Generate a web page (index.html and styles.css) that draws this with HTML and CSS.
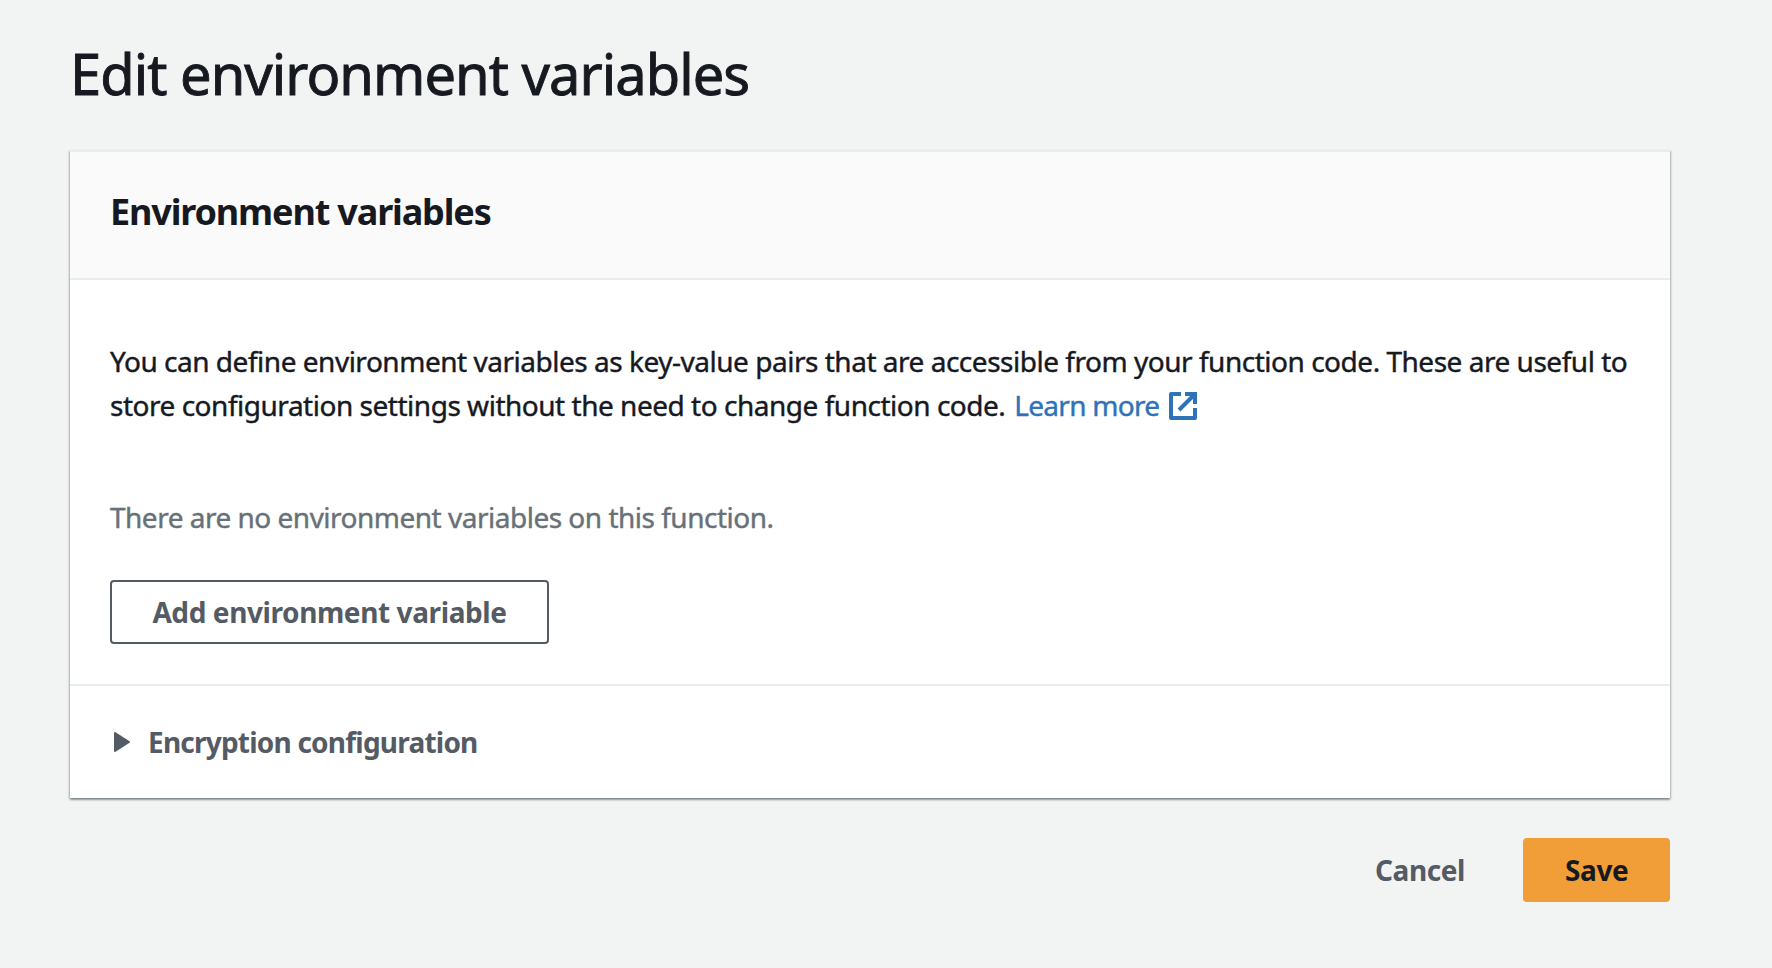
FILE: index.html
```html
<!DOCTYPE html>
<html lang="en">
<head>
<meta charset="utf-8">
<title>Edit environment variables</title>
<link rel="stylesheet" href="styles.css">
</head>
<body>
<main class="page">
  <h1 class="page-title">Edit environment variables</h1>
  <section class="card">
    <header class="card-header"><h2 class="card-title">Environment variables</h2></header>
    <div class="card-body">
      <p class="description">You can define environment variables as key-value pairs that are accessible from your function code. These are useful to<br>store configuration settings without the need to change function code. <a class="link" href="#">Learn more<svg class="external" viewBox="0 0 28 28" aria-hidden="true"><path d="M12 2H2V26H26V16" fill="none" stroke="currentColor" stroke-width="4" stroke-linejoin="round"/><path d="M16 2H26V12M25 3L10 18" fill="none" stroke="currentColor" stroke-width="4"/></svg></a></p>
      <p class="empty">There are no environment variables on this function.</p>
      <button class="button" type="button">Add environment variable</button>
    </div>
    <div class="expander"><svg class="caret" viewBox="0 0 16 20" aria-hidden="true"><path d="M1 1L15 10L1 19Z" fill="currentColor" stroke="currentColor" stroke-width="2" stroke-linejoin="round"/></svg>Encryption configuration</div>
  </section>
  <footer class="actions">
    <button class="button button-link" type="button">Cancel</button>
    <button class="button button-primary" type="button">Save</button>
  </footer>
</main>
</body>
</html>
```

FILE: styles.css
```css
* { box-sizing: border-box; }

body {
  margin: 0;
  background: #f2f3f3;
  color: #16191f;
  font: 28px/44px "Noto Sans", "Open Sans", sans-serif;
}

.page { padding: 38px 102px 0 70px; }

.page-title {
  margin: 0 0 42px;
  font-size: 56px;
  font-weight: 400;
  line-height: 70px;
  letter-spacing: -0.95px;
  -webkit-text-stroke: 0.9px currentColor;
}

.card {
  height: 648px;
  display: flex;
  flex-direction: column;
  background: #fff;
  border-top: 2px solid #eaeded;
  box-shadow: 0 2px 2px rgba(0, 28, 36, 0.3), 1px 1px 2px rgba(0, 28, 36, 0.2), -1px 1px 2px rgba(0, 28, 36, 0.2);
}

.card-header {
  height: 128px;
  padding: 38px 40px 0;
  background: #fafafa;
  border-bottom: 2px solid #eaeded;
}

.card-title {
  margin: 0;
  font-size: 36px;
  font-weight: 700;
  line-height: 44px;
  letter-spacing: -1.15px;
}

.card-body {
  height: 406px;
  padding: 59px 40px 0;
  border-bottom: 2px solid #eaeded;
}

.description {
  margin: 0 0 68px;
  letter-spacing: -0.48px;
  white-space: nowrap;
  -webkit-text-stroke: 0.4px currentColor;
}

.link {
  margin-left: 2px;
  color: #2e73b8;
  text-decoration: none;
  letter-spacing: -0.7px;
}

.external {
  width: 28px;
  height: 28px;
  margin-left: 10px;
  vertical-align: -4px;
}

.empty {
  margin: 0 0 41px;
  color: #687078;
  letter-spacing: -0.5px;
  -webkit-text-stroke: 0.4px currentColor;
}

.button {
  height: 64px;
  padding: 0 40px;
  display: block;
  background: #fff;
  border: 2px solid #545b64;
  border-radius: 4px;
  color: #545b64;
  font: 700 28px/44px "Noto Sans", "Open Sans", sans-serif;
  letter-spacing: -0.4px;
  white-space: nowrap;
}

.card-body .button { width: 439px; }

.expander {
  padding: 34px 44px 0;
  display: flex;
  align-items: center;
  gap: 18px;
  color: #545b64;
  font-weight: 700;
  letter-spacing: -0.78px;
}

.caret { width: 16px; height: 20px; }

.actions {
  margin-top: 40px;
  display: flex;
  justify-content: flex-end;
  gap: 16px;
}

.button-link {
  background: transparent;
  border-color: transparent;
}

.button-primary {
  width: 147px;
  background: #f19e38;
  border-color: #f19e38;
  color: #16191f;
}
```
